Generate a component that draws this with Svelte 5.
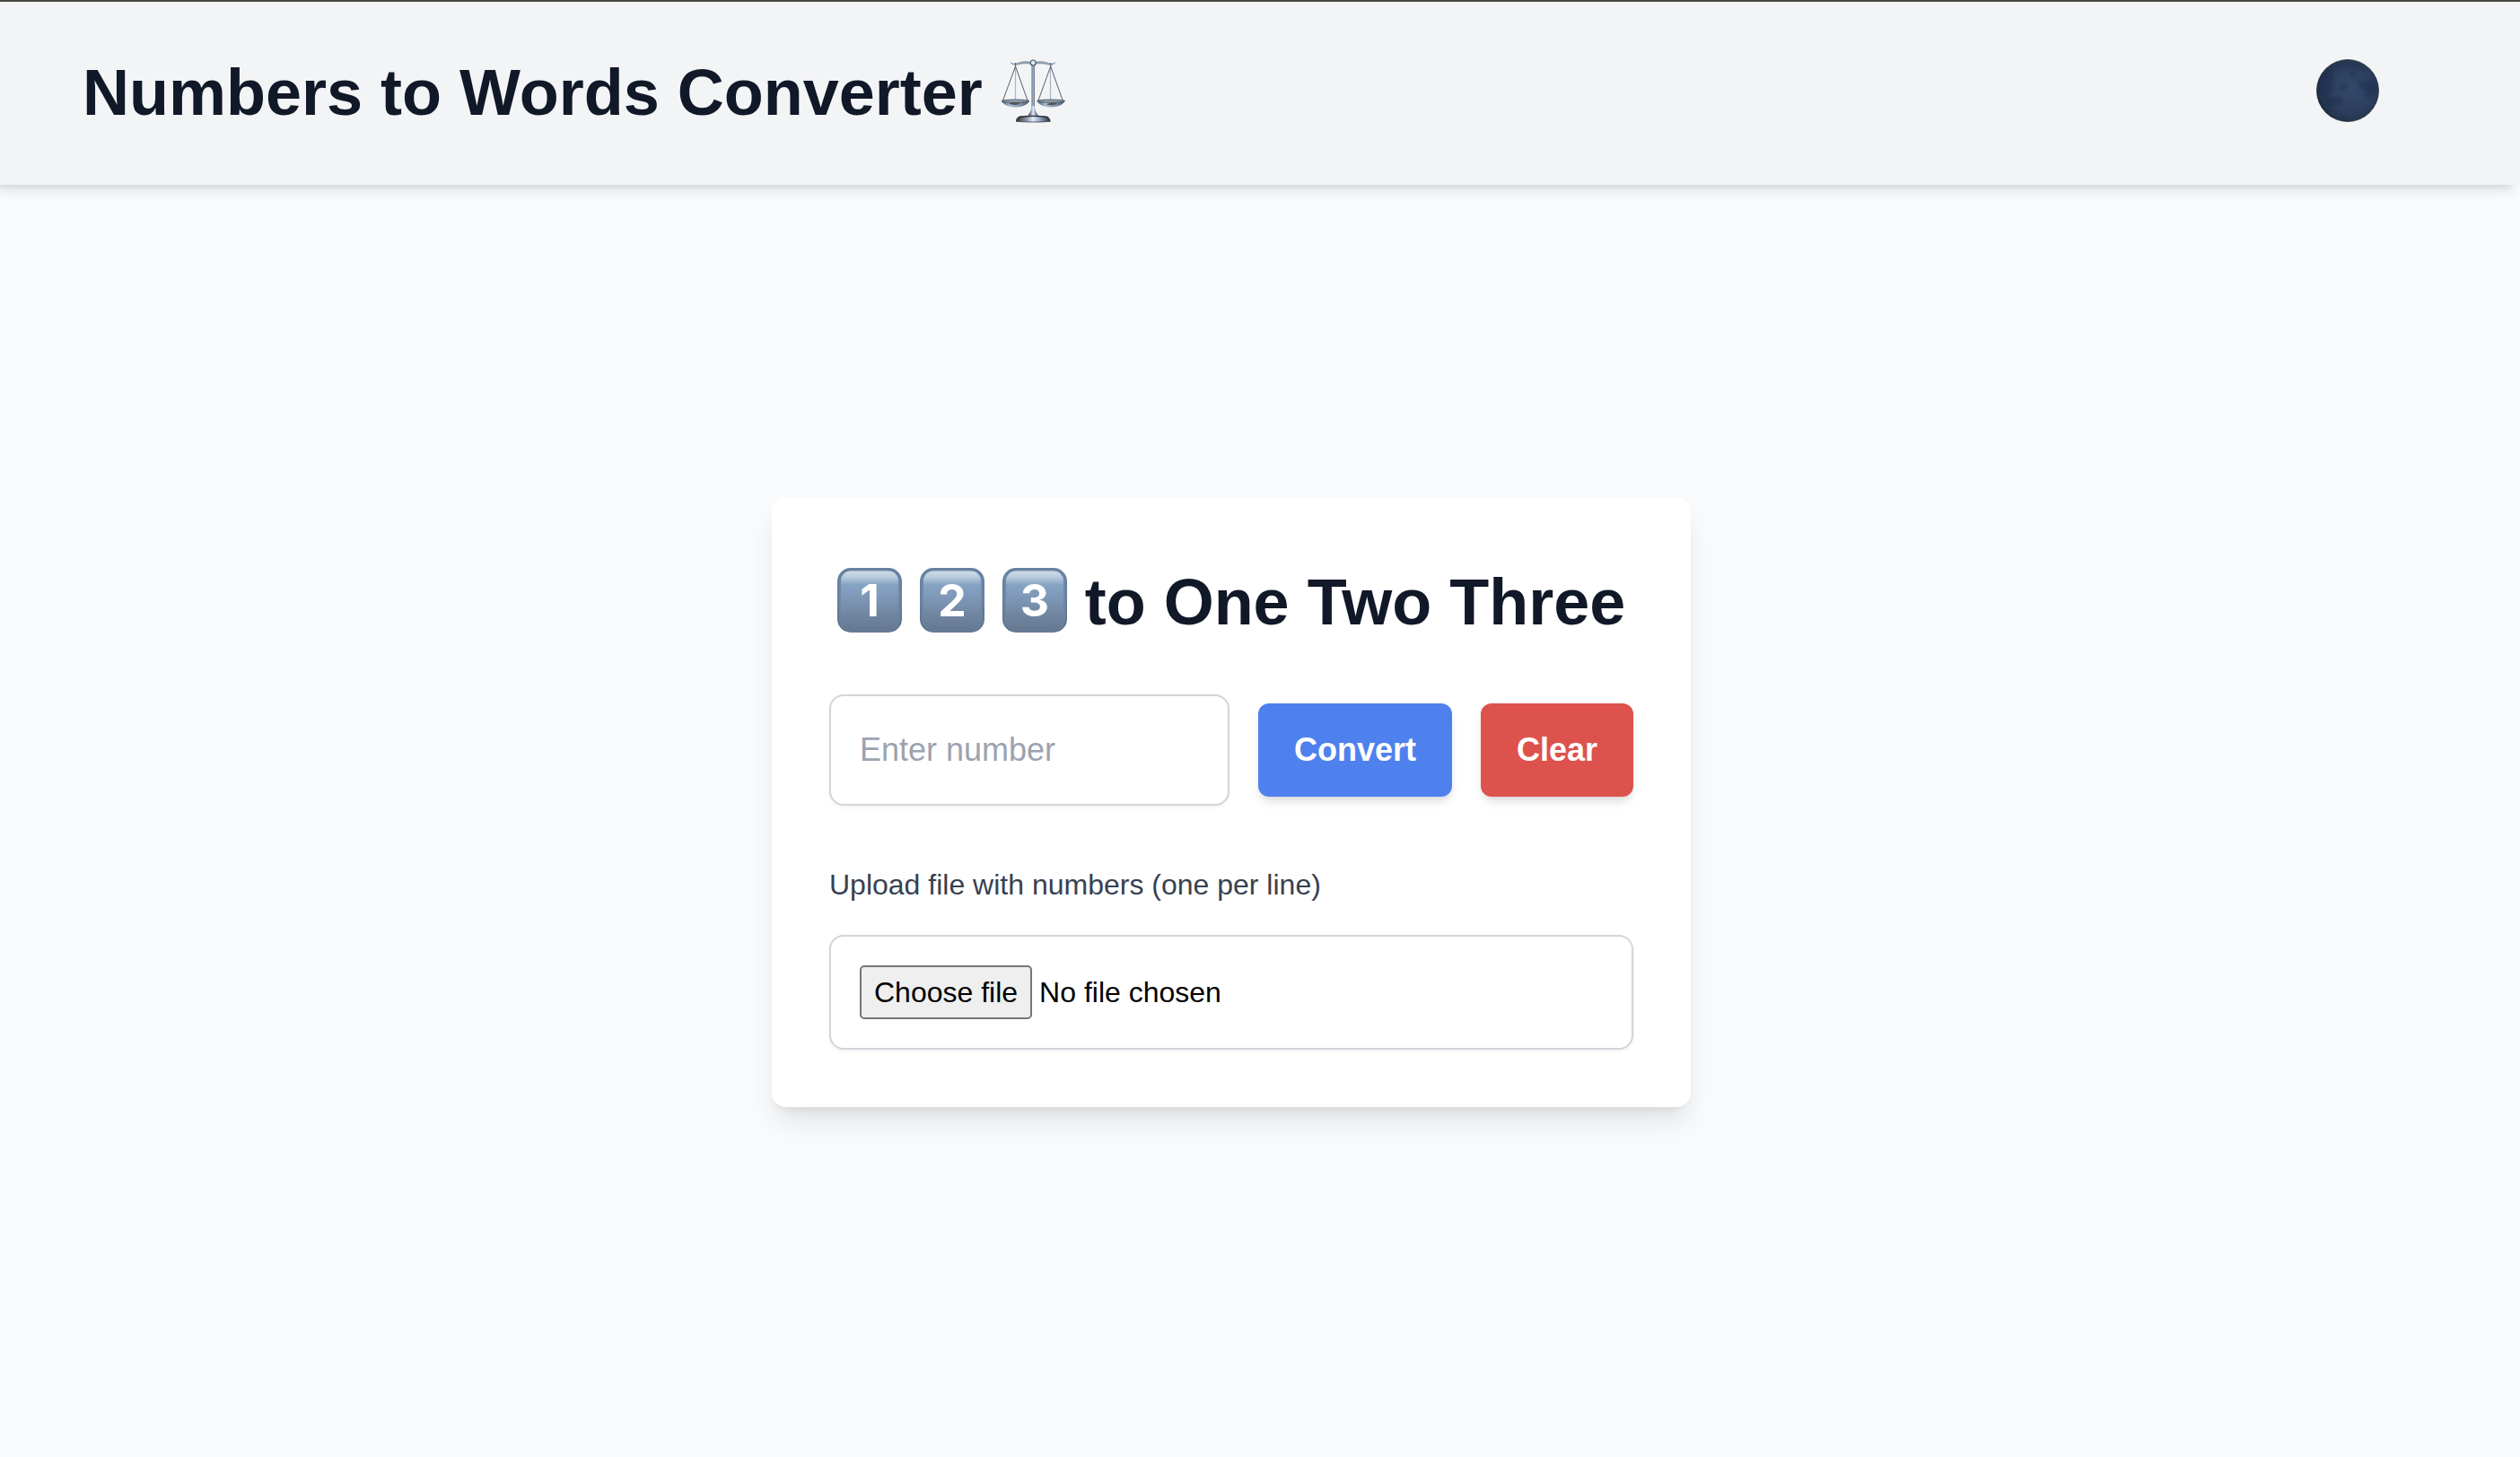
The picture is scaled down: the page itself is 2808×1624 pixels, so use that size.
<script>
  let value = $state('');
  let files = $state(null);
  let fileName = $derived(files && files.length ? files[0].name : 'No file chosen');
  const digits = ['1', '2', '3'];

  function submit(event) {
    event.preventDefault();
  }

  function clear() {
    value = '';
  }
</script>

<div class="page">
  <header>
    <h1>
      Numbers to Words Converter
      <svg class="emoji" viewBox="0 0 72 72" role="img" aria-label="Scales">
        <defs>
          <linearGradient id="post" x1="0" x2="1" y1="0" y2="0">
            <stop offset="0" stop-color="#536476" />
            <stop offset="0.5" stop-color="#a9bdd3" />
            <stop offset="1" stop-color="#4b5a6c" />
          </linearGradient>
          <linearGradient id="foot" x1="0" x2="1" y1="0" y2="0">
            <stop offset="0" stop-color="#2c2b30" />
            <stop offset="0.3" stop-color="#8a93a6" />
            <stop offset="0.5" stop-color="#e4edfb" />
            <stop offset="0.72" stop-color="#8b9cb8" />
            <stop offset="1" stop-color="#2c2b30" />
          </linearGradient>
          <linearGradient id="pan" x1="0" x2="1" y1="0" y2="0">
            <stop offset="0" stop-color="#4c5b6b" />
            <stop offset="0.3" stop-color="#a5bdd2" />
            <stop offset="0.65" stop-color="#8499ae" />
            <stop offset="1" stop-color="#44505e" />
          </linearGradient>
        </defs>
        <path d="M11 4.500c2 1.800 5 1.800 8 .8 5-2 10-2.600 15-.8h4c5-1.800 10-1.200 15 .8 3 1 6 1 8-.8-1 2.300-4 3.200-8 2.600-5-1.200-10-1.800-15-.6h-4c-5-1.200-10-.6-15 .6-4 .6-7-.3-8-2.600Z" fill="#8fa0b1" stroke="#66778a" stroke-width=".4" />
        <rect x="34.500" y="7" width="3.400" height="48" fill="url(#post)" />
        <circle cx="36.200" cy="5" r="3" fill="#dce8f4" stroke="#46576b" stroke-width="1.100" />
        <path d="M16.500 5v6M55.700 5v6" stroke="#56677b" stroke-width="1.200" />
        <path d="M16.500 10v38M55.500 10v38" stroke="#a7b4ca" stroke-width="1.200" />
        <path d="M16.500 9 2.500 47M16.500 9l13.500 38M55.700 9 42 47M55.700 9l13.500 38" fill="none" stroke="#566069" stroke-width="1" />
        <path d="M1 47.500h31c-2 4-7.500 7-15.500 7S3 51.500 1 47.500Z" fill="url(#pan)" />
        <path d="M40.500 47.500h31c-2 4-7.500 7-15.500 7s-13.500-3-15.500-7Z" fill="url(#pan)" />
        <ellipse cx="16.500" cy="47.600" rx="15.500" ry="1.500" fill="#9aacbb" stroke="#3d4853" stroke-width=".9" />
        <ellipse cx="56" cy="47.600" rx="15.500" ry="1.500" fill="#9aacbb" stroke="#3d4853" stroke-width=".9" />
        <path d="M9 50.500c3-2 8-2 13-.2-3 2-8 2.200-13 .2ZM51 51.500c3-2.200 8-2.600 12-1.300-3 2.300-8 2.700-12 1.300Z" fill="#56524f" />
        <path d="M34.500 53h3.400c.3 5 2 8 4.300 11h-12c2.300-3 4-6 4.300-11Z" fill="url(#foot)" />
        <path d="M17 70.500c0-4 3-6.300 7-6.500 4-.4 20-.4 24 0 4.500.2 7.500 2.500 7.500 6.500-7 1.200-31 1.200-38.500 0Z" fill="url(#foot)" />
        <path d="M20 66c7-2.200 25-2.200 33 0" fill="none" stroke="#29282b" stroke-width="1.400" />
        <path d="M17.500 70.200c7 1 31 1 38 0" fill="none" stroke="#4e5563" stroke-width=".9" />
      </svg>
    </h1>
    <button class="theme" type="button" aria-label="Toggle dark mode">
      <svg class="emoji" viewBox="0 0 72 72" aria-hidden="true">
        <defs>
          <radialGradient id="moon" cx="0.560" cy="0.480" r="0.560">
            <stop offset="0" stop-color="#34486a" />
            <stop offset="0.600" stop-color="#2d405f" />
            <stop offset="0.900" stop-color="#263650" />
            <stop offset="1" stop-color="#1d2735" />
          </radialGradient>
          <filter id="soft"><feGaussianBlur stdDeviation="1.500" /></filter>
          <clipPath id="disc"><circle cx="36" cy="36" r="34" /></clipPath>
        </defs>
        <circle cx="36" cy="36" r="34.500" fill="url(#moon)" stroke="#222b38" stroke-width=".8" />
        <g clip-path="url(#disc)" filter="url(#soft)" fill="#1f2f50" opacity=".5">
          <path d="M4 24c4-7 10-12 16-13l-2 7 4 4-5 6 3 6-5 6 6 4 6-1 4 4-4 6-8-1-2 5-7-5-5-11Z" />
          <path d="M27 32l5-3 4 2-3 4-6 1ZM38 17l5-3 2 4-4 3ZM48 24l7 3 7-4 6 6 1 12-6-1-3 7-4-5 2-5-7-3-3-5Z" />
          <path d="M20 9c8-4 18-5 27-2l8 7-9-3-8 1-8-2-7 2Z" opacity=".7" />
          <path d="M28 65l4-1 3 2-4 1Z" />
        </g>
      </svg>
    </button>
  </header>

  <main>
    <section class="card">
      <h2>
        {#each digits as digit}
          <svg class="emoji" viewBox="0 0 72 72" role="img" aria-label={digit}>
            <defs>
              <linearGradient id="key-edge-{digit}" x1="0" x2="0" y1="0" y2="1">
                <stop offset="0" stop-color="#65809f" />
                <stop offset="0.450" stop-color="#68809d" />
                <stop offset="1" stop-color="#5d7088" />
              </linearGradient>
              <linearGradient id="key-face-{digit}" x1="0" x2="0" y1="0" y2="1">
                <stop offset="0" stop-color="#d0dce8" />
                <stop offset="0.100" stop-color="#b9cbdc" />
                <stop offset="0.230" stop-color="#86a3c4" />
                <stop offset="0.500" stop-color="#7c94b4" />
                <stop offset="0.720" stop-color="#7186a1" />
                <stop offset="1" stop-color="#647891" />
              </linearGradient>
            </defs>
            <rect width="72" height="72" rx="15" fill="url(#key-edge-{digit})" />
            <rect x="2" y="2" width="68" height="69" rx="14" fill="#7592b4" opacity=".5" />
            <rect x="4" y="3.500" width="64" height="66.500" rx="11" fill="url(#key-face-{digit})" />
            <text class="digit" x="36" y="54" text-anchor="middle">{digit}</text>
          </svg>{' '}
        {/each}
        to One Two Three
      </h2>

      <form onsubmit={submit}>
        <input class="number" type="text" placeholder="Enter number" aria-label="Enter number" bind:value />
        <button class="convert" type="submit">Convert</button>
        <button class="clear" type="button" onclick={clear}>Clear</button>
      </form>

      <label class="upload-label" for="upload">Upload file with numbers (one per line)</label>
      <div class="upload">
        <span class="choose" aria-hidden="true">Choose file</span>
        <span class="file-name">{fileName}</span>
        <input id="upload" type="file" bind:files />
      </div>
    </section>
  </main>
</div>

<style>
  :global(body) {
    margin: 0;
    background: #f9fafc;
  }

  .page {
    display: flex;
    flex-direction: column;
    min-height: 100vh;
    overflow-x: clip;
    font-family: 'Liberation Sans', Arial, Helvetica, sans-serif;
    color: #111827;
  }

  .page :where(*) {
    box-sizing: border-box;
  }

  header {
    display: flex;
    align-items: center;
    justify-content: space-between;
    padding: 48px 92px 50px;
    border-top: 2px solid #47473f;
    background: #f3f4f6;
    box-shadow: -6px 8px 12px -2px rgb(0 0 0 / 0.1), -6px 4px 8px -4px rgb(0 0 0 / 0.1);
  }

  h1,
  h2 {
    margin: 0;
    font-size: 72px;
    font-weight: 700;
    line-height: 106px;
  }

  h2 {
    text-align: center;
    margin-bottom: 50px;
  }

  .emoji {
    width: 72px;
    height: 72px;
    vertical-align: -9px;
  }

  .digit {
    font-family: Inter, sans-serif;
    font-size: 50px;
    font-weight: 700;
    fill: #fff;
  }

  button {
    border: 0;
    font-family: inherit;
    cursor: pointer;
  }

  .theme {
    padding: 0 64px;
    background: none;
    font-size: 72px;
    font-weight: 700;
    line-height: 106px;
  }

  main {
    flex: 1;
    display: flex;
    align-items: center;
    justify-content: center;
    padding: 0 64px 42px 0;
  }

  .card {
    width: 100%;
    max-width: 1024px;
    padding: 64px;
    border-radius: 16px;
    background: #fff;
    box-shadow: 0 20px 30px -6px rgb(0 0 0 / 0.1), 0 8px 12px -8px rgb(0 0 0 / 0.1);
  }

  form {
    display: flex;
    align-items: center;
    gap: 32px;
    margin-bottom: 64px;
  }

  .number {
    flex: 1;
    min-width: 0;
    height: 124px;
    padding: 0 32px;
    border: 2px solid #d1d5db;
    border-radius: 16px;
    background: #fff;
    box-shadow: 0 2px 4px rgb(0 0 0 / 0.05);
    font: inherit;
    font-size: 36px;
    color: #111827;
  }

  .number::placeholder {
    color: #9ca3af;
    opacity: 1;
  }

  .convert,
  .clear {
    padding: 24px 40px;
    border-radius: 12px;
    box-shadow: 0 8px 12px -2px rgb(0 0 0 / 0.1), 0 4px 8px -4px rgb(0 0 0 / 0.1);
    font-size: 36px;
    font-weight: 700;
    line-height: 56px;
    color: #fff;
  }

  .convert {
    background: #4f81ee;
  }

  .clear {
    background: #dd524c;
  }

  .upload-label {
    display: block;
    margin-bottom: 32px;
    font-size: 32px;
    line-height: 48px;
    color: #374151;
  }

  .upload {
    position: relative;
    display: flex;
    align-items: center;
    gap: 8px;
    padding: 32px;
    border: 2px solid #d1d5db;
    border-radius: 16px;
    box-shadow: 0 2px 4px rgb(0 0 0 / 0.05);
    font-size: 32px;
    line-height: 56px;
    color: #000;
  }

  .choose {
    padding: 0 14px;
    border: 2px solid #767676;
    border-radius: 5px;
    background: #efefef;
  }

  .upload:focus-within {
    border-color: #4f81ee;
  }

  #upload {
    position: absolute;
    inset: 0;
    width: 100%;
    opacity: 0;
    cursor: pointer;
  }
</style>
